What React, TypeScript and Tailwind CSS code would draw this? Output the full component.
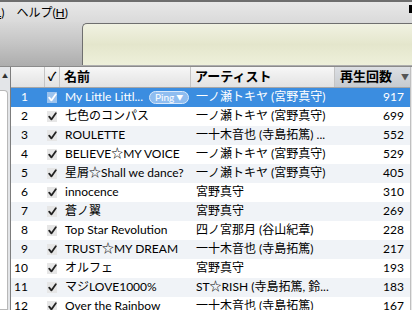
const rows: [number, string, string, number][] = [
  [1, "My Little Littl...", "一ノ瀬トキヤ (宮野真守)", 917],
  [2, "七色のコンパス", "一ノ瀬トキヤ (宮野真守)", 699],
  [3, "ROULETTE", "一十木音也 (寺島拓篤) ...", 552],
  [4, "BELIEVE☆MY VOICE", "一ノ瀬トキヤ (宮野真守)", 529],
  [5, "星屑☆Shall we dance?", "一ノ瀬トキヤ (宮野真守)", 405],
  [6, "innocence", "宮野真守", 310],
  [7, "蒼ノ翼", "宮野真守", 269],
  [8, "Top Star Revolution", "四ノ宮那月 (谷山紀章)", 228],
  [9, "TRUST☆MY DREAM", "一十木音也 (寺島拓篤)", 217],
  [10, "オルフェ", "宮野真守", 193],
  [11, "マジLOVE1000%", "ST☆RISH (寺島拓篤, 鈴...", 183],
  [12, "Over the Rainbow", "一十木音也 (寺島拓篤)", 167],
]

function Check({ selected }: { selected?: boolean }) {
  return (
    <span className={`flex h-[11px] w-[10px] items-center justify-center ${selected ? "bg-[#9cc3ee]" : "bg-[#e6e6e6]"}`}>
      <svg width="9" height="9" viewBox="0 0 9 9" fill="none" stroke={selected ? "#ffffff" : "#222222"} strokeWidth="1.8" strokeLinecap="round" strokeLinejoin="round">
        <path d="M1.2 4.6l2.2 2.8L7.8 1.2" />
      </svg>
    </span>
  )
}

export default function App() {
  return (
    <div className="h-[310px] w-[412px] overflow-hidden bg-white text-[12px] text-black" style={{ fontFamily: 'Lato, "Noto Sans CJK JP", sans-serif' }}>
      {/* menu bar */}
      <div className="flex h-[22px] items-center border-t-2 border-[#6e6e6e] bg-gradient-to-b from-[#e8e8e8] to-[#dadada] pt-[1px]">
        <span className="-ml-[5px]"><span className="underline">L</span>)</span>
        <span className="ml-[12px]">ヘルプ(<span className="underline">H</span>)</span>
        <span className="ml-auto mb-[8px] h-[8px] w-[3px] bg-black" />
      </div>

      {/* toolbar */}
      <div className="flex h-[44px] bg-gradient-to-b from-[#d9d9d9] via-[#c4c4c4] to-[#adadad] pl-[82px]">
        <div className="mt-[1px] h-[42px] flex-1 rounded-tl-[5px] border-l border-t border-[#6f6f6f] bg-gradient-to-b from-[#f1f2e2] via-[#e4e6cc] to-[#eef0da]" />
      </div>

      <div className="flex h-[244px] border-t border-[#8b8b8b]">
        {/* left source strip */}
        <div className="flex w-[10px] flex-col bg-[#e3e5e8]">
          <span className="ml-[2px] mt-[6px] text-[6px] leading-none text-[#333]">▲</span>
          <div className="mt-[11px] h-full w-[8px] rounded-tr-[4px] border border-l-0 border-[#b8b8b8] bg-white" />
        </div>
        <div className="w-px bg-[#7d7d7d]" />

        {/* table */}
        <div className="flex w-[399px] flex-col">
          <div className="flex h-[24px] items-center border-b border-[#a6a6a6] bg-gradient-to-b from-[#f7f7f7] to-[#e2e2e2] text-[13px] font-bold">
            <div className="h-full w-[34px] border-r border-[#c4c4c4]" />
            <div className="flex h-full w-[15px] items-center justify-center border-r border-[#c4c4c4] text-[12px]">✓</div>
            <div className="flex h-full w-[131px] items-center border-r border-[#c4c4c4] pl-[4px]">名前</div>
            <div className="flex h-full w-[144px] items-center border-r border-[#c4c4c4] pl-[4px]">アーティスト</div>
            <div className="flex h-full flex-1 items-center bg-gradient-to-b from-[#dcdfe3] to-[#c7cbd0] pl-[5px]">
              再生回数<span className="ml-[9px] text-[8px] text-[#555]">▼</span>
            </div>
          </div>
          {rows.map(([n, name, artist, plays]) => {
            const sel = n === 1
            const bg = sel ? "bg-[#3b8de0] text-white" : n % 2 === 1 ? "bg-[#f0f3f7]" : "bg-white"
            return (
              <div key={n} className={`flex h-[19px] shrink-0 items-center ${bg}`}>
                <div className="w-[17px] text-right">{n}</div>
                <div className="flex w-[32px] justify-end pr-[3px]"><Check selected={sel} /></div>
                <div className="flex w-[131px] items-center pl-[5px] whitespace-nowrap">
                  {name}
                  {sel && (
                    <span className="ml-[6px] flex h-[13px] items-center rounded-full border border-[#d8e8fa] bg-[#8fbdf0] px-[5px] text-[10px] leading-none">
                      Ping<span className="ml-[2px] text-[7px]">▼</span>
                    </span>
                  )}
                </div>
                <div className="w-[144px] overflow-hidden pl-[5px] whitespace-nowrap">{artist}</div>
                <div className="flex-1 pr-[6px] text-right">{plays}</div>
              </div>
            )
          })}
        </div>
        <div className="flex-1 border-l border-[#c0c0c0] bg-[#e8e8e8]" />
      </div>
    </div>
  )
}
